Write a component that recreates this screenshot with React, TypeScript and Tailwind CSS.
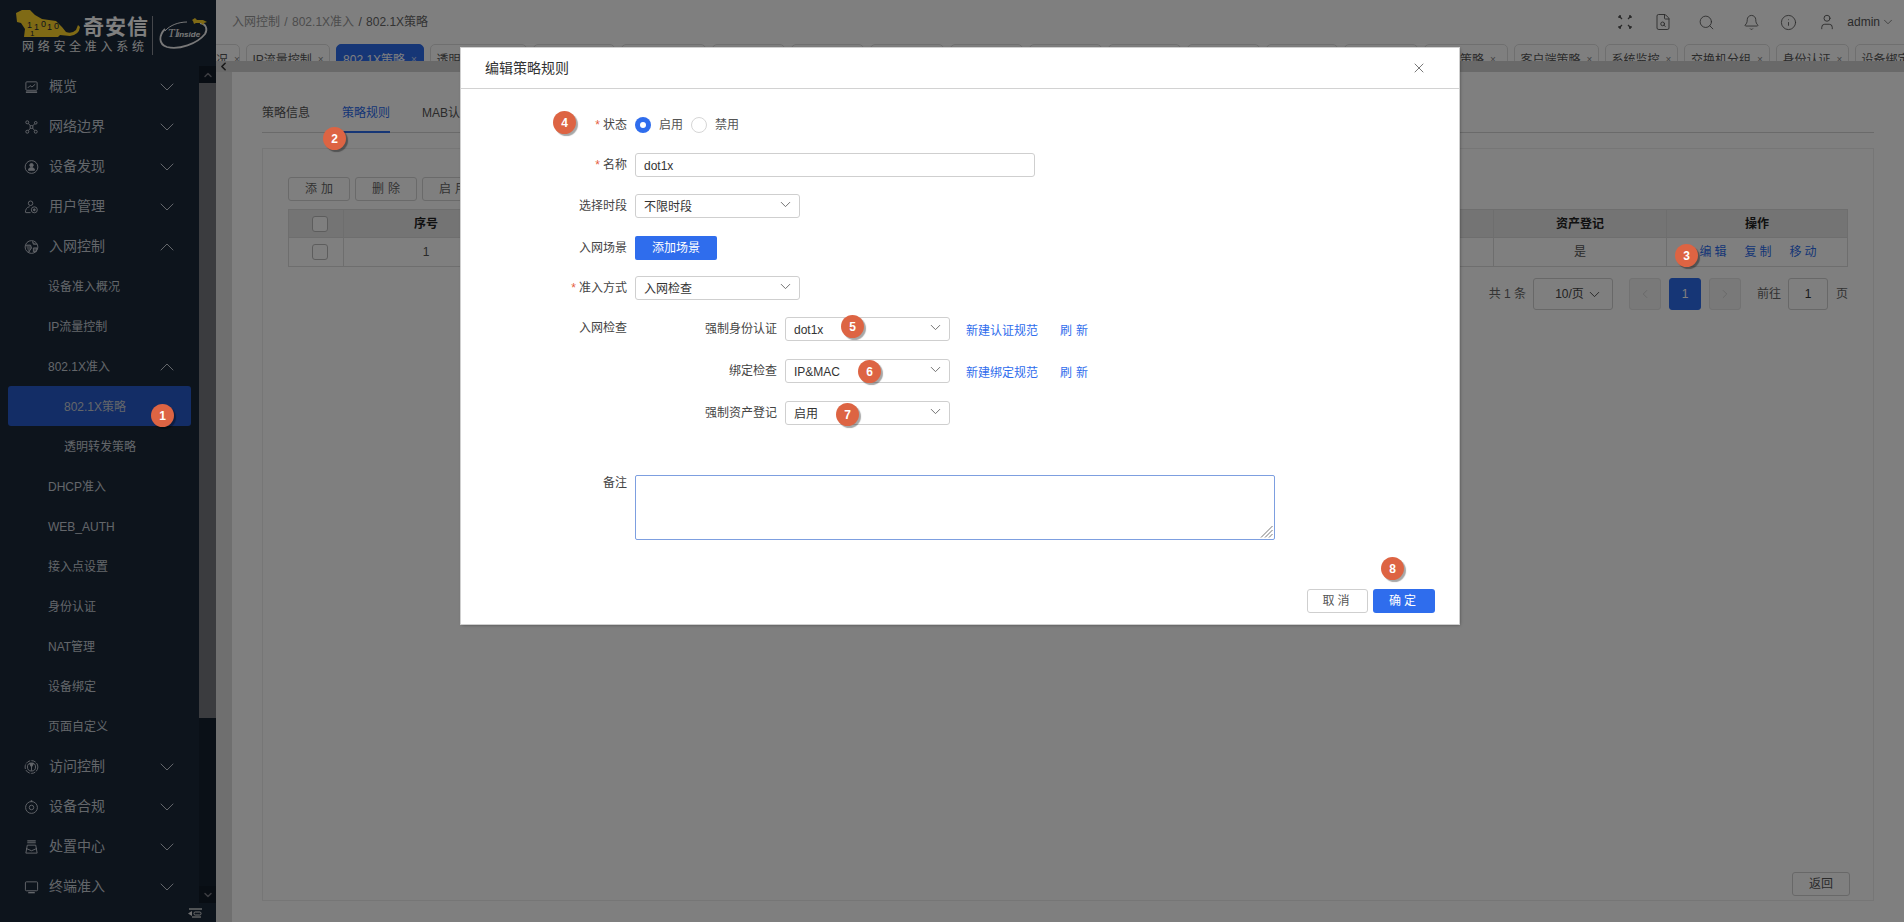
import React from "react";
import { ChevronDown, ChevronUp, ChevronLeft, ChevronRight, X, Search, Bell, Info, User, FileSearch } from "lucide-react";

const ic = { width: 16, height: 16, viewBox: "0 0 16 16", fill: "none", stroke: "currentColor", strokeWidth: 1 };

const Icons: Record<string, React.ReactNode> = {
  overview: (
    <svg {...ic}><rect x="2" y="2.5" width="12" height="9" rx="1" /><path d="M2 13.5h12" strokeWidth="1.6" /><path d="M4 9l2.5-2.5 2 1.5L12 5" /></svg>
  ),
  network: (
    <svg {...ic}><circle cx="3.5" cy="3" r="1.6" /><circle cx="12.5" cy="3.5" r="1.4" /><circle cx="3.5" cy="13" r="1.6" /><circle cx="12.5" cy="13" r="1.6" /><circle cx="8" cy="8" r="1.6" /><path d="M4.7 4.2L7 7M11.4 4.6L9 7M4.7 11.8L7 9M11.4 11.8L9 9" /></svg>
  ),
  discover: (
    <svg {...ic}><circle cx="8" cy="8" r="6.8" /><circle cx="8" cy="6" r="1.8" fill="currentColor" /><path d="M4.8 11.5c0-2 1.4-3 3.2-3s3.2 1 3.2 3z" fill="currentColor" /></svg>
  ),
  user: (
    <svg {...ic}><circle cx="7" cy="4" r="2.4" /><path d="M1.5 14c0-3.5 1.5-6 4.5-6.3" /><path d="M2 14h5" /><circle cx="11" cy="11" r="3.2" /><circle cx="11" cy="11" r="1" fill="currentColor" /></svg>
  ),
  globe: (
    <svg {...ic}><circle cx="8" cy="8" r="6.8" /><path d="M2 6h5l1 3-2 3-1 2M9 2l1 3h4M10 9h4l-1 4-3 0z" fill="currentColor" fillOpacity="0.5" /></svg>
  ),
  radar: (
    <svg {...ic}><circle cx="8" cy="8" r="6.8" strokeDasharray="5 1.2" /><circle cx="8" cy="8" r="4.3" /><path d="M8 8L5.8 4.2h4.4z" fill="currentColor" /><path d="M8 8v4" /></svg>
  ),
  target: (
    <svg {...ic}><circle cx="8" cy="8.5" r="6.3" /><circle cx="8" cy="8.5" r="2.4" /><path d="M8 0.8v2" strokeWidth="1.6" /></svg>
  ),
  inbox: (
    <svg {...ic}><path d="M3.5 1.5h9M3.5 3.5h9" strokeWidth="1.2" /><path d="M3.5 6h9l1.5 8.5H2z" /><path d="M2.2 9.5L8 12l5.8-2.5" /></svg>
  ),
  monitor: (
    <svg {...ic}><rect x="1.5" y="2.5" width="13" height="9.5" rx="1" /><path d="M4.5 14h7" strokeWidth="1.5" /></svg>
  ),
};

type MenuItem = { label: string; level: 0 | 1 | 2; icon?: string; arrow?: "down" | "up"; active?: boolean };

const menu: MenuItem[] = [
  { label: "概览", level: 0, icon: "overview", arrow: "down" },
  { label: "网络边界", level: 0, icon: "network", arrow: "down" },
  { label: "设备发现", level: 0, icon: "discover", arrow: "down" },
  { label: "用户管理", level: 0, icon: "user", arrow: "down" },
  { label: "入网控制", level: 0, icon: "globe", arrow: "up" },
  { label: "设备准入概况", level: 1 },
  { label: "IP流量控制", level: 1 },
  { label: "802.1X准入", level: 1, arrow: "up" },
  { label: "802.1X策略", level: 2, active: true },
  { label: "透明转发策略", level: 2 },
  { label: "DHCP准入", level: 1 },
  { label: "WEB_AUTH", level: 1 },
  { label: "接入点设置", level: 1 },
  { label: "身份认证", level: 1 },
  { label: "NAT管理", level: 1 },
  { label: "设备绑定", level: 1 },
  { label: "页面自定义", level: 1 },
  { label: "访问控制", level: 0, icon: "radar", arrow: "down" },
  { label: "设备合规", level: 0, icon: "target", arrow: "down" },
  { label: "处置中心", level: 0, icon: "inbox", arrow: "down" },
  { label: "终端准入", level: 0, icon: "monitor", arrow: "down" },
];

function MenuRow({ item }: { item: MenuItem }) {
  const Arrow = item.arrow === "up" ? ChevronUp : ChevronDown;
  return (
    <div className={`relative flex h-10 shrink-0 items-center pt-[1px] ${item.active ? "mx-2 rounded-[3px] bg-[#265acc]" : ""}`}>
      {item.level === 0 && (
        <>
          <span className="ml-6 flex w-[15px] justify-center text-[#c6ccd4]">{Icons[item.icon!]}</span>
          <span className="ml-[10px] text-[14px] text-[#c6ccd4]">{item.label}</span>
        </>
      )}
      {item.level === 1 && <span className="ml-12 text-[12px] text-[#c6ccd4]">{item.label}</span>}
      {item.level === 2 && <span className={`text-[12px] text-[#c6ccd4] ${item.active ? "ml-[56px]" : "ml-16"}`}>{item.label}</span>}
      {item.arrow && <Arrow className="absolute left-[155px] top-[9px] text-[#c6ccd4]" size={24} strokeWidth={1} />}
    </div>
  );
}

function Logo() {
  return (
    <div className="relative h-[66px] w-full shrink-0">
      <svg className="absolute left-[14px] top-2" width="70" height="32" viewBox="14 8 70 32">
        <path d="M16 13L22 10L30 10L35 15L42 19L56 21L62 27L66 32Q72 34 76 30L78 25L80 27Q79 35 70 36L60 35L58 37L24 37L25 29L21 23L17 22Z" fill="#ffd42a" />
        <text x="27" y="28" fontSize="9" fill="#1a2839" fontFamily="Liberation Sans">1</text>
        <text x="34" y="30" fontSize="9" fill="#1a2839" fontFamily="Liberation Sans">1</text>
        <text x="41" y="27" fontSize="9" fill="#1a2839" fontFamily="Liberation Sans">0</text>
        <text x="47" y="30" fontSize="9" fill="#1a2839" fontFamily="Liberation Sans">1</text>
        <text x="54" y="29" fontSize="9" fill="#1a2839" fontFamily="Liberation Sans">0</text>
        <text x="30" y="36" fontSize="8" fill="#1a2839" fontFamily="Liberation Sans">1</text>
      </svg>
      <span className="absolute left-[83px] top-[13px] text-[21px] font-bold leading-7 tracking-[1px] text-white">奇安信</span>
      <span className="absolute left-[22px] top-[39px] whitespace-nowrap text-[12px] leading-4 tracking-[3.7px] text-[#f0f0f0]">网络安全准入系统</span>
      <div className="absolute left-[152px] top-4 h-[39px] w-px bg-[#8a8f96]" />
      <svg className="absolute left-[157px] top-[17px]" width="52" height="34" viewBox="0 0 52 34">
        <path d="M8 12C2 18 1 27 10 30c12 3 30-3 38-13 3-5 1-10-5-11" fill="none" stroke="#f0f0f0" strokeWidth="1.8" />
        <path d="M8 14C13 8 22 5 30 5" fill="none" stroke="#f0f0f0" strokeWidth="1" />
        <path d="M35 3l3-2 2 2 6 0 4 2-3 1-1 2-2-2-5 0-2 1-1-3z" fill="#ffd42a" />
        <text x="11" y="20" fontSize="12" fontStyle="italic" fill="#f0f0f0" fontFamily="Liberation Serif">TI</text>
        <text x="20" y="19.5" fontSize="8" fontStyle="italic" fontWeight="700" fill="#f0f0f0" fontFamily="Liberation Sans">inside</text>
      </svg>
    </div>
  );
}

function Sidebar() {
  return (
    <aside className="flex h-full w-[216px] shrink-0 flex-col bg-[#1a2839]">
      <Logo />
      <div className="flex h-[837px] shrink-0 overflow-hidden">
        <div className="flex w-[199px] shrink-0 flex-col">
          {menu.map((m) => (
            <MenuRow key={m.label} item={m} />
          ))}
        </div>
        <div className="flex w-[17px] shrink-0 flex-col bg-[#14202f]">
          <div className="flex h-[17px] shrink-0 items-center justify-center bg-[#101a26]">
            <ChevronUp size={12} strokeWidth={3} className="text-[#767880]" />
          </div>
          <div className="h-[635px] shrink-0 bg-[#76787f]" />
          <div className="flex-1" />
          <div className="flex h-[17px] shrink-0 items-center justify-center bg-[#101a26]">
            <ChevronDown size={12} strokeWidth={3} className="text-[#767880]" />
          </div>
        </div>
      </div>
      <div className="flex flex-1 items-center justify-end pr-[14px] text-[#e0e0e0]">
        <svg width="14" height="10" viewBox="0 0 14 10" fill="none" stroke="currentColor">
          <path d="M1 1h13" strokeWidth="1.4" />
          <path d="M0 5.5l4-2.5v5z" fill="currentColor" stroke="none" />
          <rect x="6" y="4" width="7" height="3" rx="1.2" />
          <path d="M4 9h9" strokeWidth="1.2" />
        </svg>
      </div>
    </aside>
  );
}

function TopBar() {
  return (
    <header className="flex h-11 shrink-0 items-center bg-white pl-4 pr-[9px]">
      <div className="text-[12px] text-[#999]">
        入网控制 <span className="mx-[1px]">/</span> 802.1X准入 <span className="mx-[1px] text-[#666]">/</span> <span className="text-[#666]">802.1X策略</span>
      </div>
      <div className="ml-auto flex items-center text-[#555]">
        <svg className="mr-[22px]" width="14" height="14" viewBox="0 0 14 14" fill="none" stroke="currentColor" strokeWidth="1.3">
          <path d="M1 1l3 3M13 1l-3 3M1 13l3-3M13 13l-3-3M1 1h2M1 1v2M13 1h-2M13 1v2M1 13h2M1 13v-2M13 13h-2M13 13v-2" />
        </svg>
        <FileSearch className="mr-[26px]" size={18} strokeWidth={1.2} />
        <Search className="mr-[28px]" size={17} strokeWidth={1.2} />
        <Bell className="mr-[20px]" size={17} strokeWidth={1.2} />
        <Info className="mr-[21px]" size={17} strokeWidth={1.2} />
        <User className="mr-[11px]" size={18} strokeWidth={1.2} />
        <span className="text-[12px]">admin</span>
        <ChevronDown className="ml-[1px]" size={14} strokeWidth={1.2} />
      </div>
    </header>
  );
}

const tabs: { label: string; w: string; active?: boolean }[] = [
  { label: "设备准入概况", w: "w-[84px]" },
  { label: "IP流量控制", w: "w-[84px]" },
  { label: "802.1X策略", w: "w-[88px]", active: true },
  { label: "透明转发策略", w: "w-[97px]" },
  { label: "DHCP准入", w: "w-[82px]" },
  { label: "WEB_AUTH", w: "w-[85px]" },
  { label: "接入点设置", w: "w-[73px]" },
  { label: "身份认证", w: "w-[73px]" },
  { label: "NAT管理", w: "w-[74px]" },
  { label: "设备绑定", w: "w-[73px]" },
  { label: "页面定义", w: "w-[73px]" },
  { label: "访问控制", w: "w-[73px]" },
  { label: "设备合规", w: "w-[73px]" },
  { label: "处置中心", w: "w-[72px]" },
  { label: "终端准入", w: "w-[74px]" },
  { label: "准入策略", w: "w-[84px]" },
  { label: "客户端策略", w: "w-[85px]" },
  { label: "系统监控", w: "w-[73px]" },
  { label: "交换机分组", w: "w-[86px]" },
  { label: "身份认证", w: "w-[73px]" },
  { label: "设备绑定", w: "w-[73px]" },
];

function TabStrip() {
  return (
    <div className="ml-[-60px] flex h-[17px] shrink-0 gap-[6px] overflow-hidden bg-white">
      {tabs.map((t, i) => (
        <div
          key={i}
          className={`flex h-7 shrink-0 items-start justify-center gap-[6px] whitespace-nowrap rounded-t-[5px] border pt-[6px] text-[12px] ${t.w} ${
            t.active ? "border-[#2c6ced] bg-[#2c6ced] text-white" : "border-[#dedede] bg-white text-[#555]"
          }`}
        >
          {t.label}
          <span className="text-[10px] leading-[18px] opacity-70">×</span>
        </div>
      ))}
    </div>
  );
}

function Cell({ w, children, bold }: { w: string; children?: React.ReactNode; bold?: boolean }) {
  return (
    <div className={`flex items-center justify-center border-r border-[#dcdcdc] text-[12px] last:border-r-0 ${w} ${bold ? "font-bold text-[#222]" : "text-[#555]"}`}>
      {children}
    </div>
  );
}

const Check = () => <div className="ml-[7px] h-4 w-4 rounded-[3px] border border-[#bbb] bg-white" />;

function OldButton({ children }: { children: React.ReactNode }) {
  return (
    <button className="h-6 w-[62px] rounded-[3px] border border-[#d4d4d4] bg-white pl-[4px] text-[12px] tracking-[4px] text-[#666]">{children}</button>
  );
}

function PageBox({ children, cls }: { children?: React.ReactNode; cls: string }) {
  return <div className={`flex h-8 items-center justify-center rounded-[3px] border text-[12px] ${cls}`}>{children}</div>;
}

function Content() {
  return (
    <main className="flex min-h-0 flex-1">
      <div className="w-4 shrink-0 bg-[#dedede]" />
      <div className="flex min-w-0 flex-1 flex-col bg-white pl-[30px] pr-[30px]">
        <div className="flex h-[61px] shrink-0 items-end gap-8 border-b border-[#d5d5d5] text-[12px]">
          <span className="h-[28px] text-[#555]">策略信息</span>
          <span className="mb-[-1px] h-[30px] border-b-2 border-[#2c6ced] pt-[1px] text-[#2c6ced]">策略规则</span>
          <span className="h-[28px] text-[#555]">MAB认证</span>
        </div>
        <div className="mt-[15px] mb-[21px] flex flex-1 flex-col border border-[#ececec] px-[25px] pt-7 pb-[4px]">
          <div className="flex gap-[5px]">
            <OldButton>添加</OldButton>
            <OldButton>删除</OldButton>
            <OldButton>启用</OldButton>
          </div>
          <div className="mt-2 flex h-[28px] border border-b-0 border-[#dcdcdc] bg-[#e8e8e8]">
            <Cell w="w-[55px]"><Check /></Cell>
            <Cell w="w-[165px]" bold>序号</Cell>
            <Cell w="flex-1" bold>名称</Cell>
            <Cell w="w-[173px]" bold>资产登记</Cell>
            <Cell w="w-[180px]" bold>操作</Cell>
          </div>
          <div className="flex h-[30px] border border-[#dcdcdc] bg-white">
            <Cell w="w-[55px]"><Check /></Cell>
            <Cell w="w-[165px]">1</Cell>
            <Cell w="flex-1">dot1x</Cell>
            <Cell w="w-[173px]">是</Cell>
            <Cell w="w-[180px]">
              <span className="ml-[5px] flex gap-[15px] tracking-[3px] text-[#2c6ced]">
                <span>编辑</span>
                <span>复制</span>
                <span>移动</span>
              </span>
            </Cell>
          </div>
          <div className="mt-[11px] flex items-center justify-end text-[12px] text-[#666]">
            <span>共 1 条</span>
            <PageBox cls="ml-[7px] w-[80px] gap-[2px] border-[#d0d0d0] pl-3 text-[#444]">
              10/页
              <ChevronDown size={17} strokeWidth={1.3} />
            </PageBox>
            <PageBox cls="ml-4 w-8 border-[#e4e4e4] bg-[#f2f2f2] text-[#bbb]"><ChevronLeft size={14} strokeWidth={1} /></PageBox>
            <PageBox cls="ml-2 w-8 border-[#2c6ced] bg-[#2c6ced] text-white">1</PageBox>
            <PageBox cls="ml-2 w-8 border-[#e4e4e4] bg-[#f2f2f2] text-[#bbb]"><ChevronRight size={14} strokeWidth={1} /></PageBox>
            <span className="ml-4">前往</span>
            <PageBox cls="ml-[7px] w-10 border-[#d0d0d0] text-[#333]">1</PageBox>
            <span className="ml-2">页</span>
          </div>
          <button className="mt-auto mr-[-2px] h-6 w-[58px] self-end rounded-[3px] border border-[#d0d0d0] bg-white text-[12px] text-[#555]">返回</button>
        </div>
      </div>
    </main>
  );
}

function Field({ label, required, children, cls = "items-center mt-0", labelCls = "leading-6" }: { label: string; required?: boolean; children: React.ReactNode; cls?: string; labelCls?: string }) {
  return (
    <div className={`flex ${cls}`}>
      <div className={`w-[166px] shrink-0 text-right text-[12px] text-[#444] ${labelCls}`}>
        {required && <span className="mr-[3px] text-[#e5603f]">*</span>}
        {label}
      </div>
      <div className="ml-2 flex min-w-0 items-center">{children}</div>
    </div>
  );
}

function Select({ value, w }: { value: string; w: string }) {
  return (
    <div className={`flex h-6 items-center justify-between rounded-[3px] border border-[#cfcfcf] bg-white pl-[8px] pr-[5px] text-[12px] text-[#333] ${w}`}>
      <span className="pt-[2px]">{value}</span>
      <ChevronDown className="mb-[4px] text-[#666]" size={17} strokeWidth={1.3} />
    </div>
  );
}

function SubRow({ label, value, link, cls }: { label: string; value: string; link?: string; cls: string }) {
  return (
    <div className={`flex items-center ${cls}`}>
      <div className="w-[142px] shrink-0 text-right text-[12px] text-[#444]">{label}</div>
      <div className="ml-2">
        <Select value={value} w="w-[165px]" />
      </div>
      {link && (
        <div className="ml-4 flex gap-[22px] pt-[4px] text-[12px] text-[#2f6ded]">
          <span>{link}</span>
          <span className="tracking-[4px]">刷新</span>
        </div>
      )}
    </div>
  );
}

function Radio({ on, label }: { on?: boolean; label: string }) {
  return (
    <div className="flex items-center gap-[8px] text-[12px] text-[#555]">
      {on ? (
        <span className="flex h-4 w-4 items-center justify-center rounded-full bg-[#2f6ded]">
          <span className="h-[6px] w-[6px] rounded-full bg-white" />
        </span>
      ) : (
        <span className="h-4 w-4 rounded-full border border-[#d6d6d6] bg-white" />
      )}
      {label}
    </div>
  );
}

function Dialog() {
  return (
    <section className="absolute left-[461px] top-12 flex h-[576px] w-[998px] flex-col bg-white shadow-[1px_1px_3px_rgba(0,0,0,0.4)] ring-1 ring-[#cfcfcf]">
      <div className="flex h-[41px] shrink-0 items-center justify-between border-b border-[#d2d2d2] pl-[24px] pr-[32px]">
        <span className="text-[14px] text-[#333]">编辑策略规则</span>
        <X className="text-[#333]" size={16} strokeWidth={1} />
      </div>
      <div className="flex flex-1 flex-col pt-6">
        <Field label="状态" required>
          <div className="flex gap-[8px]">
            <Radio on label="启用" />
            <Radio label="禁用" />
          </div>
        </Field>
        <Field label="名称" required cls="mt-4 items-center">
          <div className="flex h-6 w-[400px] items-center rounded-[3px] border border-[#cfcfcf] pl-2 pt-[1px] text-[12px] text-[#333]">dot1x</div>
        </Field>
        <Field label="选择时段" cls="mt-[17px] items-center">
          <Select value="不限时段" w="w-[165px]" />
        </Field>
        <Field label="入网场景" cls="mt-[18px] items-center">
          <button className="h-6 w-[82px] rounded-[2px] bg-[#2f6ded] text-[12px] text-white">添加场景</button>
        </Field>
        <Field label="准入方式" required cls="mt-4 items-center">
          <Select value="入网检查" w="w-[165px]" />
        </Field>
        <div className="mt-[17px] flex items-start">
          <div className="w-[166px] shrink-0 text-right text-[12px] leading-[23px] text-[#444]">入网检查</div>
          <div className="ml-2 flex flex-col">
            <SubRow label="强制身份认证" value="dot1x" link="新建认证规范" cls="mt-0" />
            <SubRow label="绑定检查" value="IP&MAC" link="新建绑定规范" cls="mt-[18px]" />
            <SubRow label="强制资产登记" value="启用" cls="mt-[18px]" />
          </div>
        </div>
        <Field label="备注" cls="mt-[50px] items-start" labelCls="leading-4">
          <div className="relative h-[65px] w-[640px] rounded-[2px] border border-[#7d9fe0]">
            <svg className="absolute bottom-[1px] right-[1px]" width="13" height="13" viewBox="0 0 13 13" stroke="#777" strokeWidth="1">
              <path d="M1 12.5L12.5 1M5 12.5L12.5 5M9 12.5L12.5 9" />
            </svg>
          </div>
        </Field>
        <div className="mt-[49px] flex justify-end gap-[5px] pr-6">
          <button className="h-6 w-[61px] rounded-[3px] border border-[#cfcfcf] bg-white text-[12px] tracking-[3px] text-[#555]">取消</button>
          <button className="h-6 w-[62px] rounded-[3px] bg-[#2f6ded] text-[12px] tracking-[3px] text-white">确定</button>
        </div>
      </div>
    </section>
  );
}

function Badge({ n, cls }: { n: number; cls: string }) {
  return (
    <div className={`absolute flex h-[23px] w-[23px] items-center justify-center rounded-full bg-[#dd6443] text-[12px] font-bold text-white shadow-[2px_2px_1px_rgba(0,0,0,0.35)] ${cls}`}>
      {n}
    </div>
  );
}

export default function App() {
  return (
    <div className="relative flex h-[922px] w-full overflow-hidden bg-white font-['Liberation_Sans','Noto_Sans_CJK_SC',sans-serif]">
      <Sidebar />
      <div className="flex min-w-0 flex-1 flex-col overflow-hidden">
        <TopBar />
        <TabStrip />
        <div className="relative h-[11px] shrink-0 bg-[#d2d2d2]">
          <ChevronLeft className="absolute left-[1px] top-[-1px] text-[#333]" size={13} strokeWidth={3} />
        </div>
        <Content />
      </div>
      <div className="absolute inset-0 bg-black/50" />
      <Dialog />
      <Badge n={1} cls="left-[151px] top-[404px]" />
      <Badge n={2} cls="left-[323px] top-[127px]" />
      <Badge n={3} cls="left-[1675px] top-[244px]" />
      <Badge n={4} cls="left-[553px] top-[111px]" />
      <Badge n={5} cls="left-[841px] top-[315px]" />
      <Badge n={6} cls="left-[858px] top-[360px]" />
      <Badge n={7} cls="left-[836px] top-[403px]" />
      <Badge n={8} cls="left-[1381px] top-[557px]" />
    </div>
  );
}
